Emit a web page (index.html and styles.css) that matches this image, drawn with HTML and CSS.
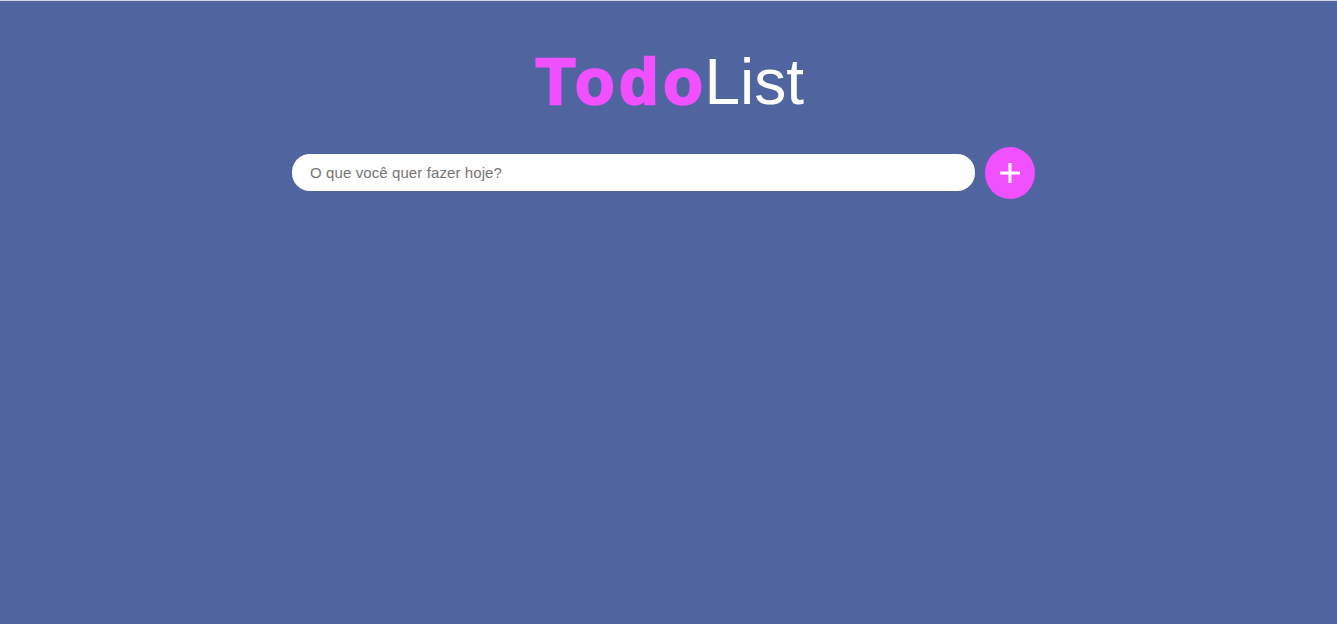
FILE: index.html
```html
<!DOCTYPE html>
<html lang="pt-BR">
<head>
<meta charset="utf-8">
<title>TodoList</title>
<link rel="stylesheet" href="styles.css">
</head>
<body>
<main class="app">
  <h1 class="title"><span class="title-bold">Todo</span><span class="title-light">List</span></h1>
  <form class="todo-form">
    <input class="todo-input" type="text" placeholder="O que você quer fazer hoje?">
    <button class="add-btn" type="button" aria-label="Adicionar">
      <svg width="22" height="22" viewBox="0 0 22 22"><path d="M11 1v20M1 11h20" stroke="#fff" stroke-width="3"/></svg>
    </button>
  </form>
</main>
</body>
</html>
```
FILE: styles.css
```css
html, body {
  margin: 0;
  height: 100%;
}
body {
  background: #5064a0;
  border-top: 1px solid #d4d6de;
  box-sizing: border-box;
  font-family: "Liberation Sans", Arial, sans-serif;
}
.app {
  display: flex;
  flex-direction: column;
  align-items: center;
  padding-top: 44px;
}
.title {
  margin: 0;
  font-size: 64px;
  line-height: 74px;
  font-weight: 400;
  padding-left: 3px;
}
.title-bold {
  color: #f050ff;
  font-weight: 700;
  letter-spacing: 5px;
  -webkit-text-stroke: 2.5px #f050ff;
  margin-right: -3px;
}
.title-light {
  color: #ffffff;
}
.todo-form {
  display: flex;
  align-items: flex-start;
  gap: 10px;
  margin-top: 28px;
  margin-right: 10px;
}
.todo-input {
  width: 683px;
  height: 37px;
  margin-top: 7px;
  box-sizing: border-box;
  border: none;
  border-radius: 18px;
  background: #fff;
  padding: 0 18px;
  font-family: "Liberation Sans", Arial, sans-serif;
  font-size: 15px;
  letter-spacing: 0.1px;
  color: #333;
  outline: none;
}
.todo-input::placeholder {
  color: #757575;
}
.add-btn {
  width: 50px;
  height: 52px;
  border: none;
  border-radius: 50%;
  background: #f050ff;
  display: flex;
  align-items: center;
  justify-content: center;
  padding: 0;
  cursor: pointer;
}
```
